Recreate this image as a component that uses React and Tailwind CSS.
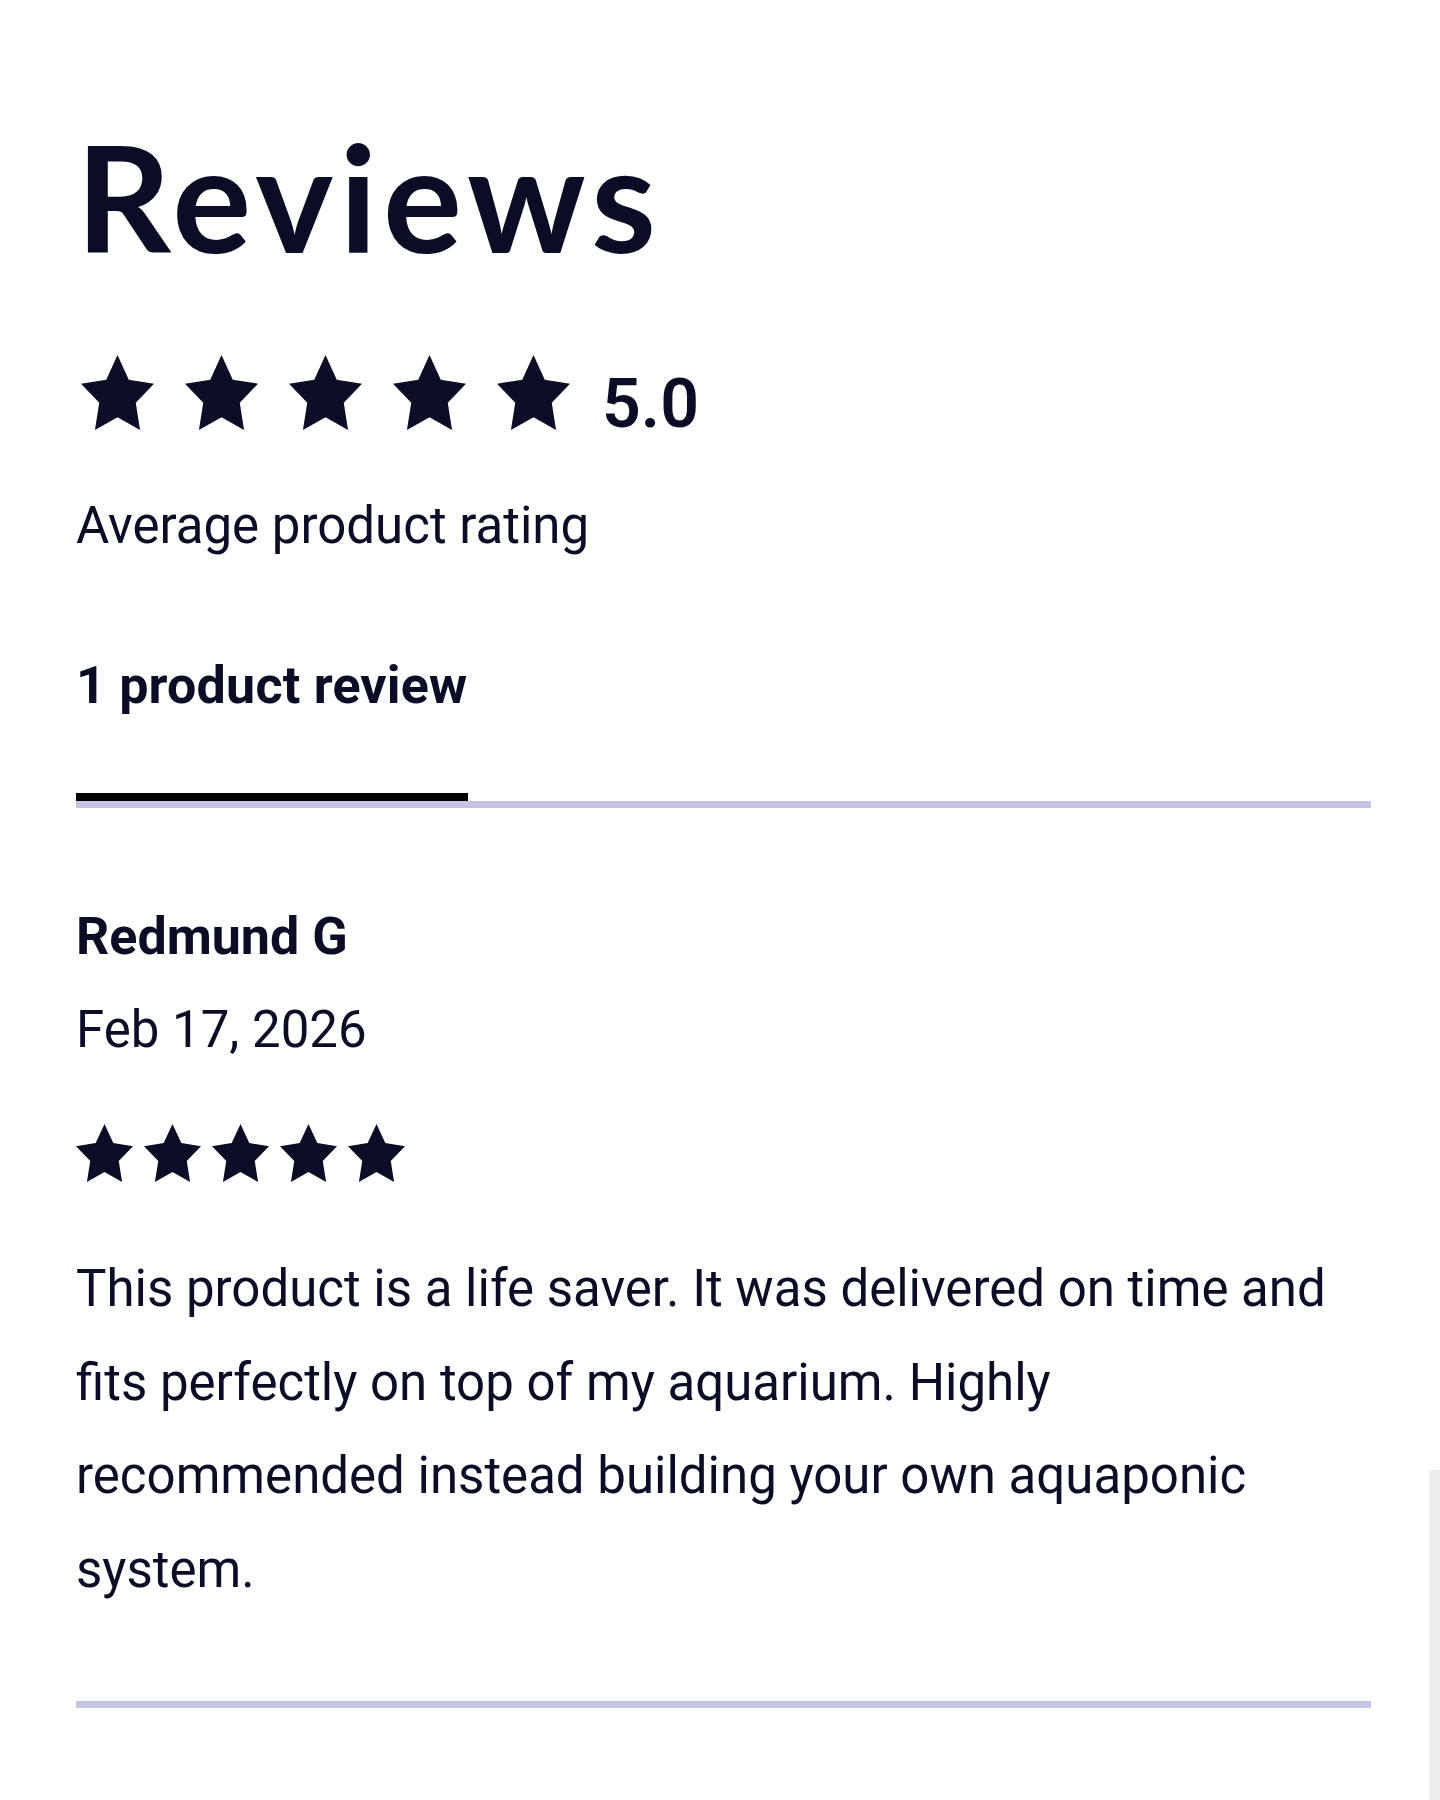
import React from 'react';

const ink = '#0b0d26';

const Star = ({ className }) => (
  <svg viewBox="2 2 20 19.02" preserveAspectRatio="none" className={className} fill={ink}>
    <polygon points="12,2 15.09,8.26 22,9.27 17,14.14 18.18,21.02 12,17.77 5.82,21.02 7,14.14 2,9.27 8.91,8.26" />
  </svg>
);

const App = () => {
  return (
    <div className="relative min-h-[1800px] bg-white pt-[122px] pl-[76px] pr-[69px] text-[#0b0d26] font-['Roboto',sans-serif]">
      <h1 className="font-['Lato',sans-serif] font-bold text-[148px] leading-[148px] tracking-[6px]">Reviews</h1>

      <div className="mt-[85px] flex items-start pl-[5px]">
        <div className="flex gap-[31px]">
          {[0, 1, 2, 3, 4].map((i) => (
            <Star key={i} className="w-[73px] h-[75px]" />
          ))}
        </div>
        <span className="ml-[32px] mt-[15px] text-[68px] leading-[68px] font-semibold">5.0</span>
      </div>

      <p className="mt-[58px] text-[51px] leading-[60px]">Average product rating</p>

      <h2 className="mt-[100px] text-[52px] leading-[60px] font-bold tracking-[0.2px]">1 product review</h2>

      <div className="mt-[77px] border-b-[7px] border-[#c5c3e2]">
        <div className="w-[392px] h-[8px] bg-black" />
      </div>

      <div className="mt-[99px] text-[52px] leading-[60px] font-bold">Redmund G</div>
      <div className="mt-[33px] text-[51px] leading-[60px]">Feb 17, 2026</div>

      <div className="mt-[64px] flex gap-[11px]">
        {[0, 1, 2, 3, 4].map((i) => (
          <Star key={i} className="w-[57px] h-[58px]" />
        ))}
      </div>

      <p className="mt-[60px] text-[51px] leading-[93.5px]">
        This product is a life saver. It was delivered on time and fits perfectly on top of my aquarium. Highly recommended instead building your own aquaponic system.
      </p>

      <div className="mt-[85px] h-[7px] bg-[#c5c3e2]" />

      <div className="absolute right-0 top-[1470px] bottom-0 w-[11px] bg-[#ececec] rounded-tl-[3px]" />
    </div>
  );
};

export default App;
